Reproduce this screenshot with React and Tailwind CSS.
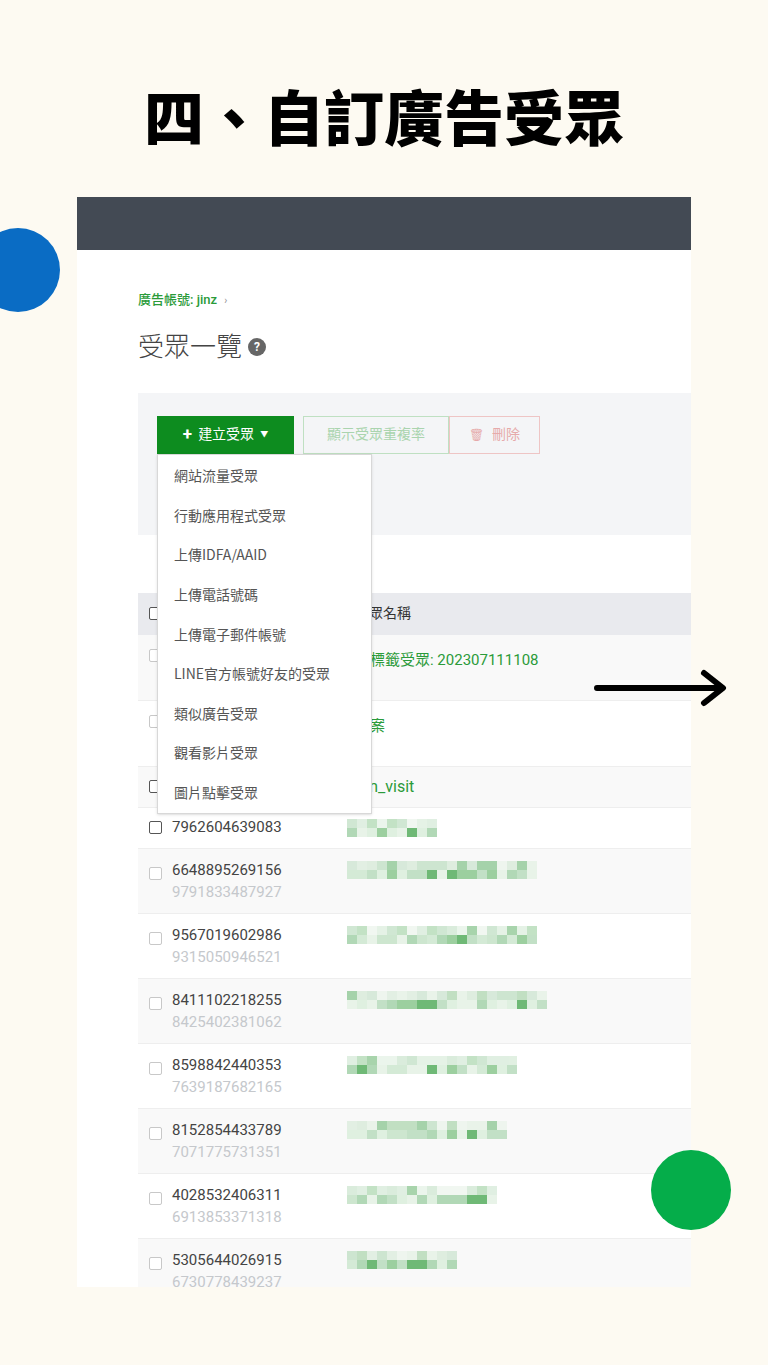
import React from "react";

const F = { fontFamily: '"Roboto","Noto Sans CJK TC",sans-serif' };

function Pix({ w, seed, top = true }) {
  const n = Math.floor(w / 10);
  let s = seed;
  const rnd = () => { s = (s * 9301 + 49297) % 233280; return s / 233280; };
  const greens = ["#e8f3e8", "#d4ead6", "#c2e0c6", "#b1d8b6", "#9ccf9f", "#6fb976", "#dff0e0", "#cde6cf"];
  const row = (k) => Array.from({ length: n }, (_, i) => (
    <div key={k + i} className="w-[10px] h-[9px]" style={{ background: greens[Math.floor(rnd() * greens.length)] }} />
  ));
  return (
    <div className="flex flex-col">
      {top && <div className="flex opacity-60">{row("a")}</div>}
      <div className="flex">{row("b")}</div>
    </div>
  );
}

const Cb = ({ dark }) => (
  <span className={`inline-block w-[13px] h-[13px] rounded-[2px] border ${dark ? "border-[#555]" : "border-[#c8c8c8]"} bg-white mr-[10px] shrink-0`} />
);

const rows = [
  ["6648895269156", "9791833487927", 190, 3],
  ["9567019602986", "9315050946521", 190, 7],
  ["8411102218255", "8425402381062", 200, 11],
  ["8598842440353", "7639187682165", 170, 19],
  ["8152854433789", "7071775731351", 160, 23],
  ["4028532406311", "6913853371318", 150, 29],
  ["5305644026915", "6730778439237", 110, 31],
];

export default function App() {
  const menu = ["網站流量受眾", "行動應用程式受眾", "上傳IDFA/AAID", "上傳電話號碼", "上傳電子郵件帳號", "LINE官方帳號好友的受眾", "類似廣告受眾", "觀看影片受眾", "圖片點擊受眾"];
  return (
    <div className="relative w-[768px] h-[1365px] bg-[#fdfaf2] overflow-hidden" style={F}>
      <h1 className="pt-[80px] text-center text-[60px] leading-[70px] font-black tracking-[0px] text-black" style={{ fontFamily: '"Noto Sans CJK TC",sans-serif' }}>四、自訂廣告受眾</h1>
      <div className="absolute left-[77px] top-[197px] w-[614px] h-[1090px] bg-white overflow-hidden">
        <div className="h-[53px] bg-[#434a54]" />
        <div className="pl-[61px]">
          <div className="mt-[40px] text-[13px] text-[#2b9b3a] font-medium">廣告帳號: jinz <span className="text-[#999] text-[10px] ml-1">›</span></div>
          <div className="mt-[18px] flex items-center text-[26px] text-[#444] font-light">受眾一覽
            <span className="ml-[6px] w-[18px] h-[18px] rounded-full bg-[#666] text-white text-[12px] font-bold flex items-center justify-center">?</span>
          </div>
          <div className="relative mt-[26px] h-[142px] bg-[#f4f5f7] pt-[23px] pl-[19px]">
            <div className="flex">
              <div className="h-[38px] w-[137px] bg-[#0d8c1f] text-white text-[14px] flex items-center justify-center gap-[6px]">
                <span className="font-bold text-[17px]">+</span>建立受眾<span className="text-[8px]">▼</span>
              </div>
              <div className="ml-[9px] h-[38px] w-[146px] border border-[#bfe0c2] text-[#aad4ae] text-[14px] flex items-center justify-center">顯示受眾重複率</div>
              <div className="h-[38px] w-[91px] border border-[#eec5c5] text-[#e6aaaa] text-[14px] flex items-center justify-center gap-[8px]">
                <span className="text-[12px]">🗑</span>刪除
              </div>
            </div>
          </div>
          <div className="mt-[58px]">
            <div className="h-[42px] bg-[#e9eaee] flex items-center pl-[11px] text-[14px] text-[#333]"><Cb dark /><span className="ml-[183px]">受眾名稱</span></div>
            <div className="h-[66px] bg-[#f9f9f9] border-b border-[#eee] flex items-start pt-[14px] pl-[11px] text-[15px]"><Cb /><span className="ml-[183px] text-[#2b9b3a]">天標籤受眾: 202307111108</span></div>
            <div className="h-[66px] bg-white border-b border-[#eee] flex items-start pt-[14px] pl-[11px] text-[15px]"><Cb /><span className="ml-[183px] text-[#2b9b3a]">成案</span></div>
            <div className="h-[41px] bg-[#f9f9f9] border-b border-[#eee] flex items-center pl-[11px] text-[16px]"><Cb dark /><span className="ml-[183px] text-[#2b9b3a]">dm_visit</span></div>
            <div className="h-[41px] bg-white border-b border-[#eee] flex items-center pl-[11px] text-[15px] text-[#444]"><Cb dark /><span className="w-[175px]">7962604639083</span><Pix w={90} seed={5} /></div>
            {rows.map(([a, b, w, s], i) => (
              <div key={a} className={`h-[65px] ${i % 2 ? "bg-white" : "bg-[#f9f9f9]"} border-b border-[#eee] flex items-start pt-[10px] pl-[11px]`}>
                <span className="mt-[4px]"><Cb /></span>
                <div className="w-[175px] leading-[22px]">
                  <div className="text-[15px] text-[#444]">{a}</div>
                  <div className="text-[15px] text-[#c5c8cc]">{b}</div>
                </div>
                <div className="mt-[2px]"><Pix w={w} seed={s} /></div>
              </div>
            ))}
          </div>
          <div className="absolute left-[80px] top-[257px] w-[215px] border border-[#d8d8d8] bg-white shadow-sm py-[1px] text-[14px] text-[#555]" style={{ fontFamily: '"Noto Sans CJK TC",sans-serif' }}>
            {menu.map((m) => <div key={m} className="h-[39.6px] flex items-center pl-[16px]">{m}</div>)}
          </div>
        </div>
      </div>
      <div className="absolute left-[-24px] top-[228px] w-[84px] h-[84px] rounded-full bg-[#0a6cc4]" />
      <div className="absolute left-[651px] top-[1150px] w-[80px] h-[80px] rounded-full bg-[#05ad4a]" />
      <svg className="absolute left-[594px] top-[668px]" width="136" height="40" viewBox="0 0 136 40">
        <path d="M3 20 H128 M110 5 L129 20 L110 35" stroke="#000" strokeWidth="6" fill="none" strokeLinecap="round" strokeLinejoin="round" />
      </svg>
    </div>
  );
}
